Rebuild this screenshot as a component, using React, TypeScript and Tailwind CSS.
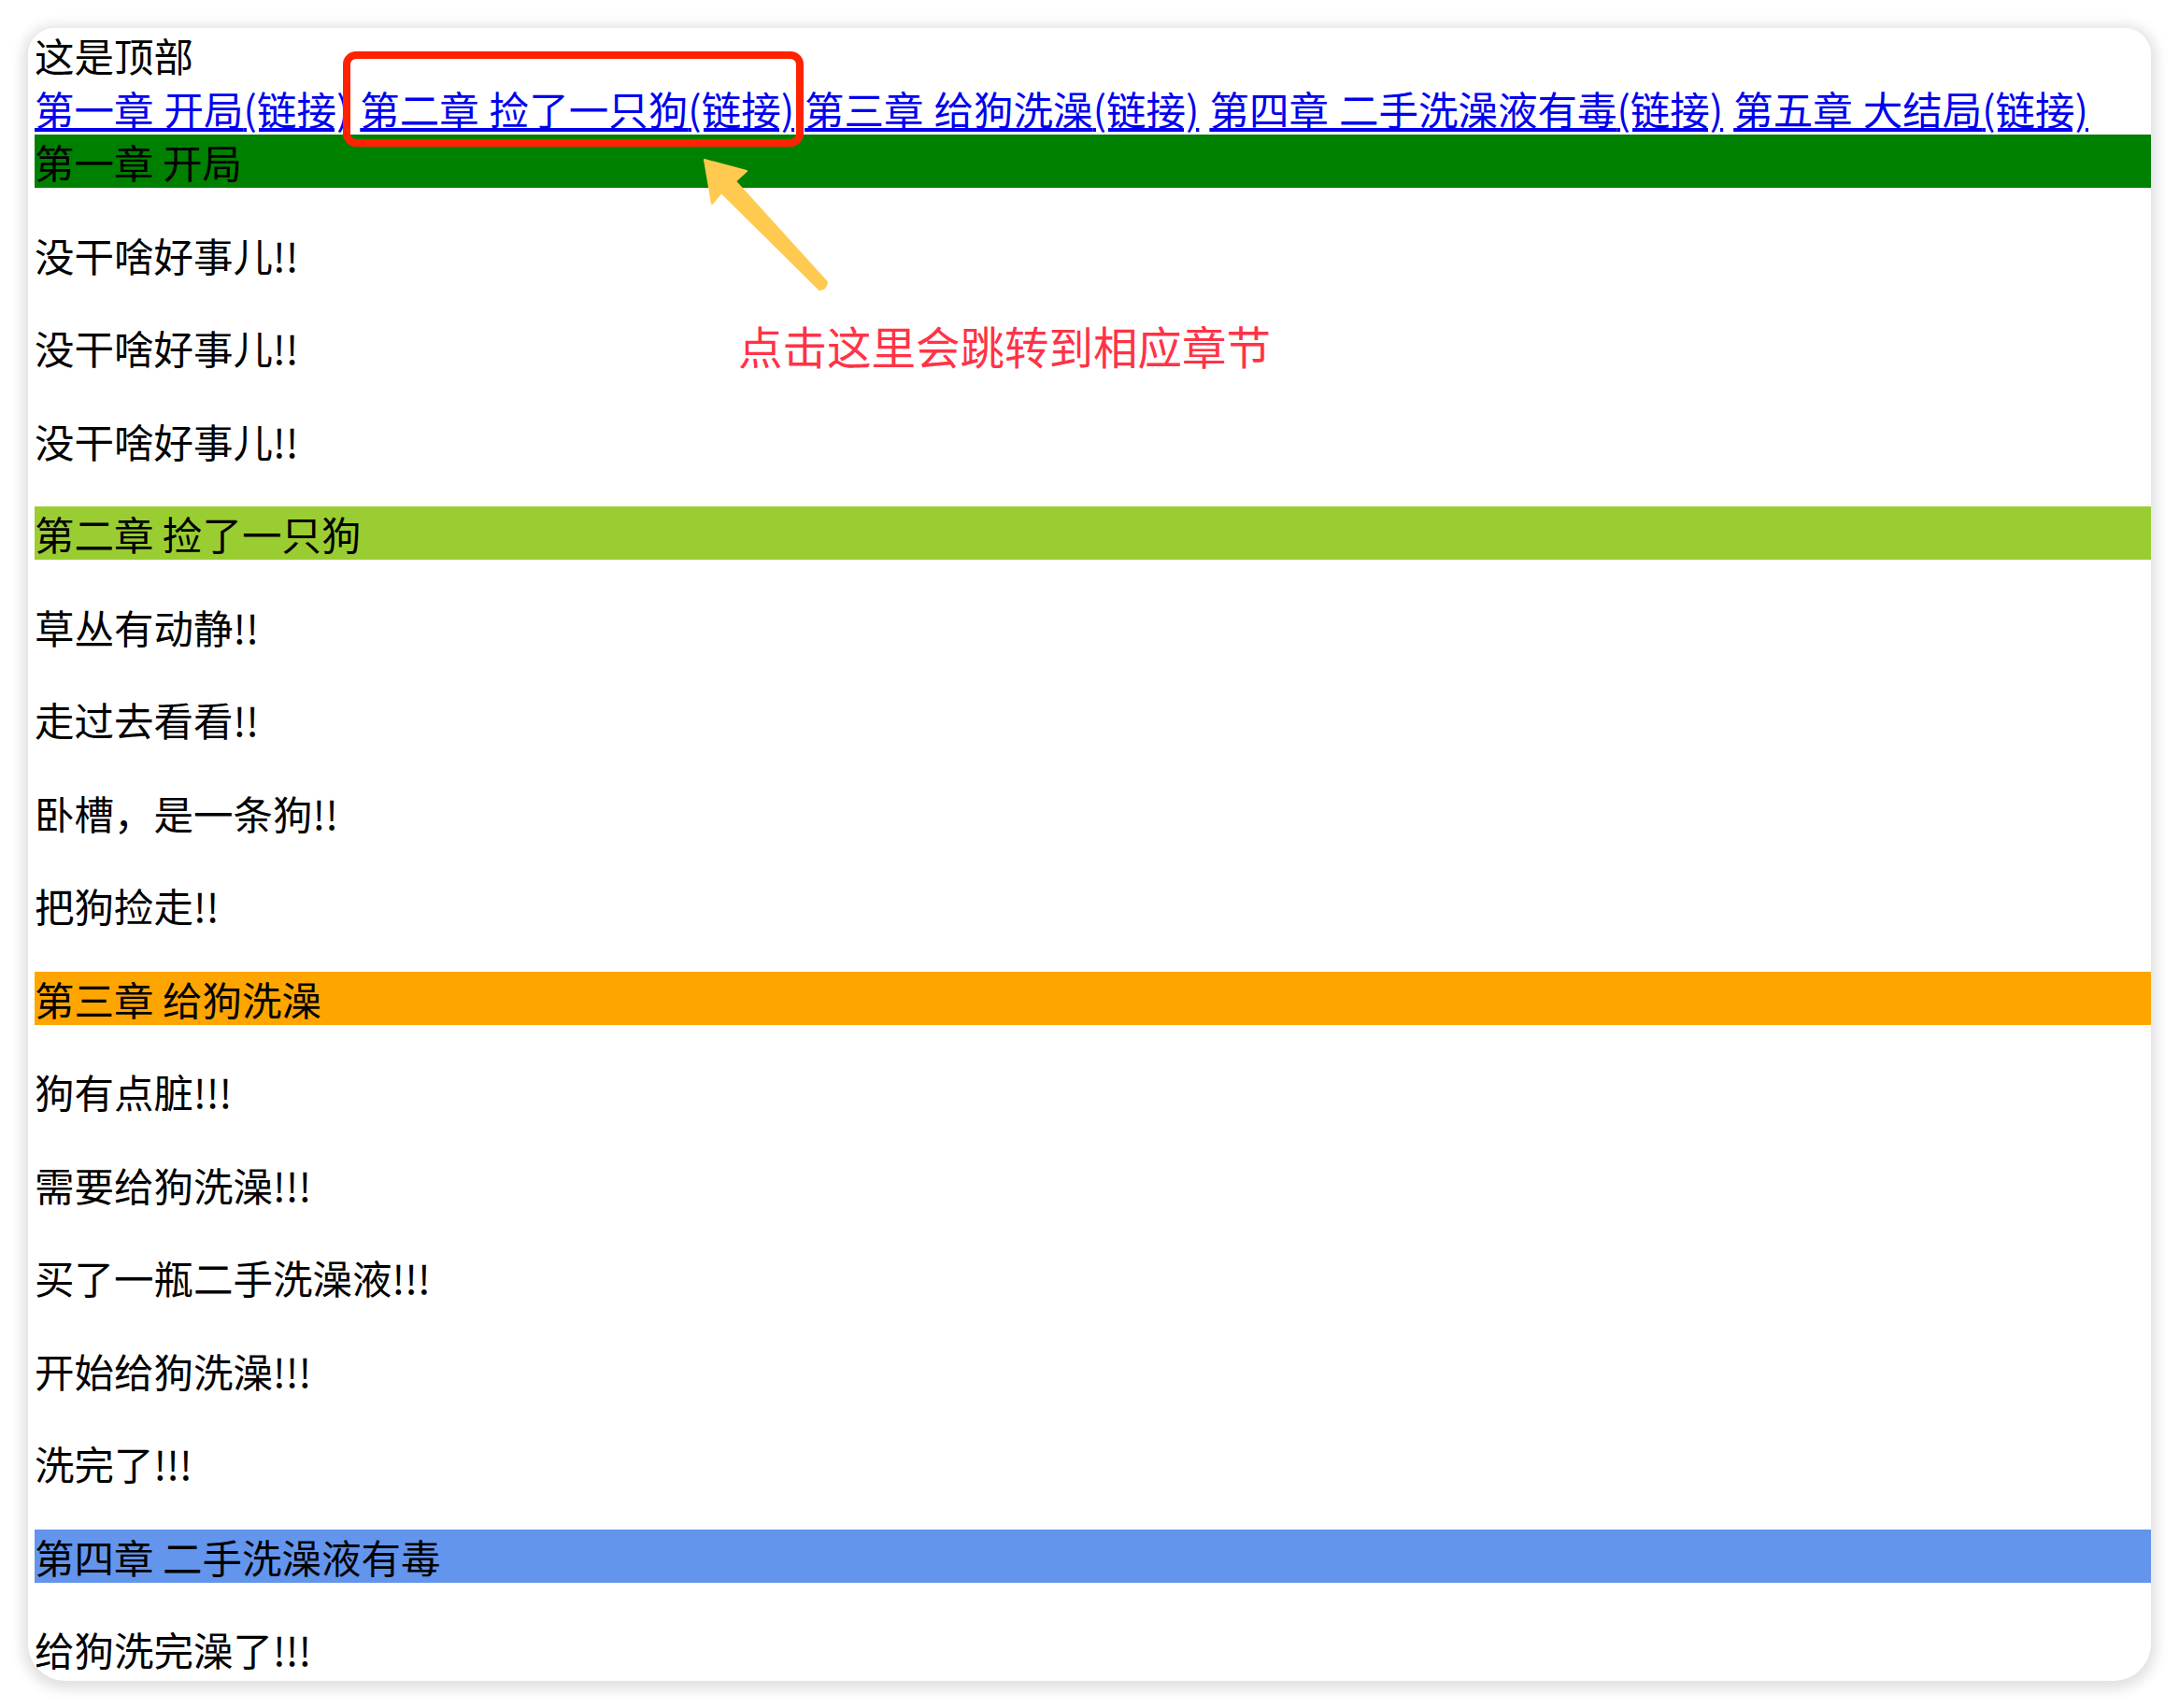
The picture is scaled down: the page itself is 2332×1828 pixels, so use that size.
const CHAPTERS = [
  {
    title: '第一章 开局',
    band: 'bg-[#008000]',
    lines: ['没干啥好事儿!!', '没干啥好事儿!!', '没干啥好事儿!!'],
  },
  {
    title: '第二章 捡了一只狗',
    band: 'bg-[#9acd32]',
    lines: ['草丛有动静!!', '走过去看看!!', '卧槽，是一条狗!!', '把狗捡走!!'],
  },
  {
    title: '第三章 给狗洗澡',
    band: 'bg-[#ffa500]',
    lines: ['狗有点脏!!!', '需要给狗洗澡!!!', '买了一瓶二手洗澡液!!!', '开始给狗洗澡!!!', '洗完了!!!'],
  },
  {
    title: '第四章 二手洗澡液有毒',
    band: 'bg-[#6495ed]',
    lines: ['给狗洗完澡了!!!'],
  },
];

const LINKS = ['第一章 开局', '第二章 捡了一只狗', '第三章 给狗洗澡', '第四章 二手洗澡液有毒', '第五章 大结局'];

function Arrow() {
  // yellow tapered arrow pointing at the highlighted link
  return (
    <svg
      className="pointer-events-none absolute left-[740px] top-[160px] h-[160px] w-[160px]"
      viewBox="740 160 160 160"
      fill="none"
    >
      <path
        d="M754 171 L799 183 L787 194 L885 302 Q884 310 877 310 L772 206 L762 218 Z"
        fill="#ffca4f"
        stroke="#ffca4f"
        strokeWidth={2}
        strokeLinejoin="round"
      />
    </svg>
  );
}

export default function App() {
  return (
    <div className="relative min-h-screen bg-white p-[30px] font-['Noto_Sans_CJK_SC','Noto_Sans',sans-serif]">
      <div className="h-[1769px] overflow-hidden rounded-t-[28px] rounded-b-[40px] bg-white shadow-[0_3px_14px_6px_rgba(0,0,0,0.12)]">
        <div className="pl-[7px] text-[42.5px] leading-[57px] text-black">
          <div>这是顶部</div>
          <div className="whitespace-nowrap [word-spacing:1.5px]">
            {LINKS.map((label, i) => (
              <span key={label}>
                <a href={`#chapter-${i + 1}`} className="text-[#0000ee] underline">
                  {label}(链接)
                </a>
                {i < LINKS.length - 1 ? ' ' : null}
              </span>
            ))}
          </div>
          {CHAPTERS.map((chapter, i) => (
            <section key={chapter.title} id={`chapter-${i + 1}`}>
              <div className={chapter.band}>{chapter.title}</div>
              {chapter.lines.map((line, j) => (
                <p key={j} className="my-[42.5px]">
                  {line}
                </p>
              ))}
            </section>
          ))}
        </div>
      </div>

      {/* annotations */}
      <div className="pointer-events-none absolute left-[367px] top-[55px] h-[102px] w-[493px] rounded-[14px] border-[8px] border-[#ff2200]" />
      <Arrow />
      <div className="pointer-events-none absolute left-[790px] top-[341px] whitespace-nowrap text-[47.5px] leading-[57px] text-[#ff3346]">
        点击这里会跳转到相应章节
      </div>
    </div>
  );
}
